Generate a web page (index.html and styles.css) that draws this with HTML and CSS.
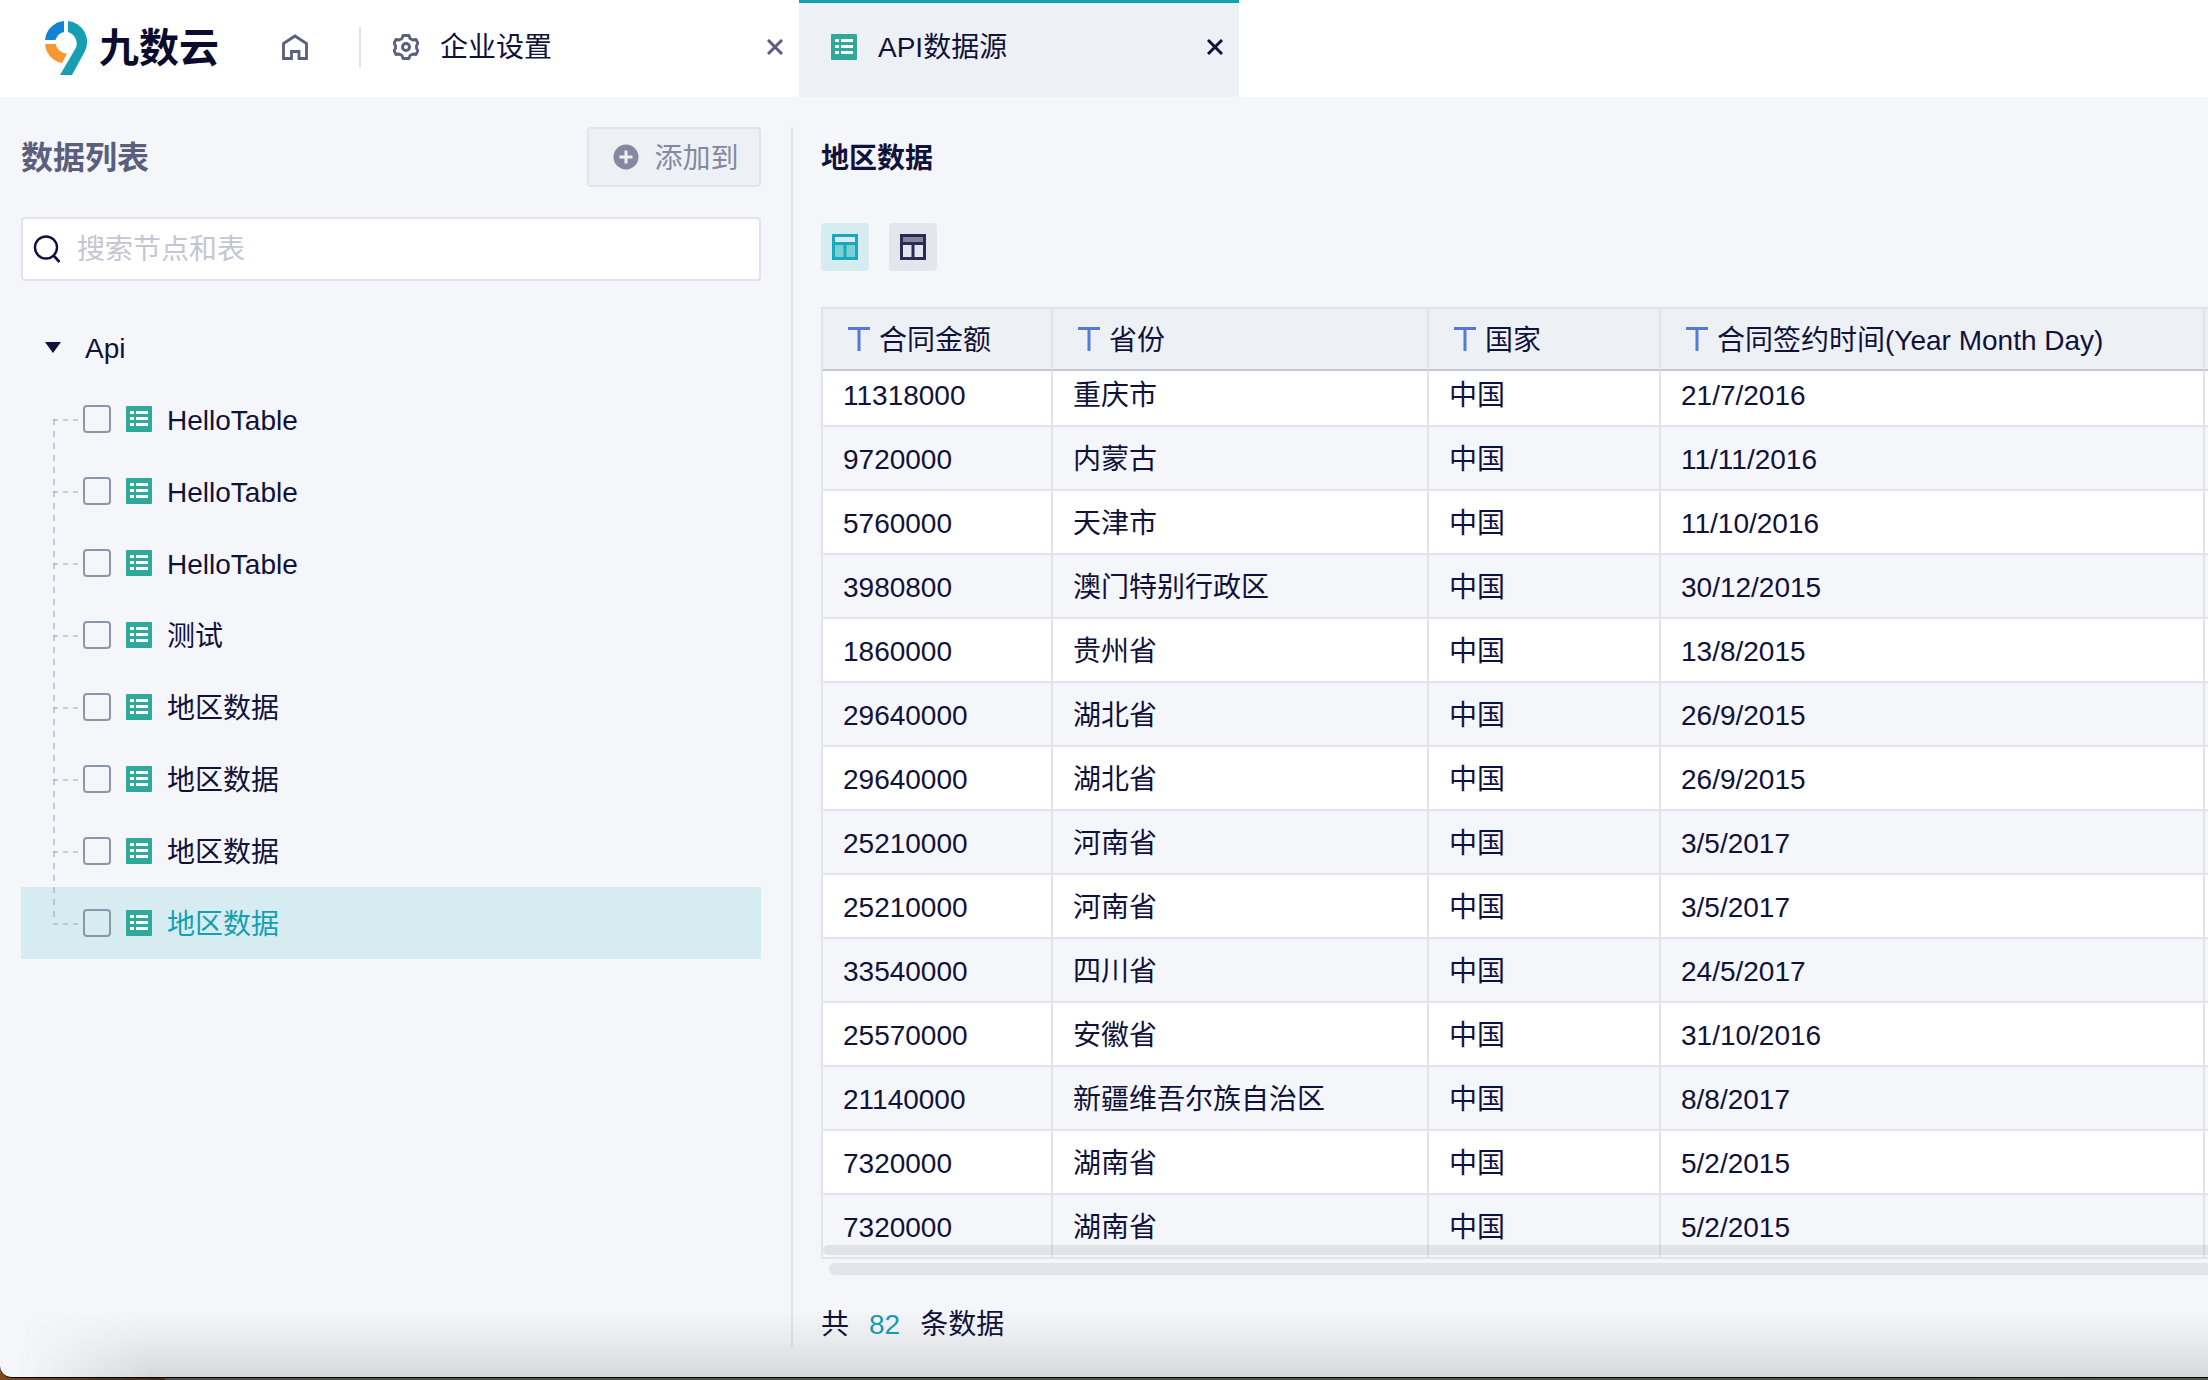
FILE: index.html
```html
<!DOCTYPE html>
<html lang="zh-CN">
<head>
<meta charset="utf-8">
<title>九数云 - API数据源</title>
<link rel="stylesheet" href="styles.css">
</head>
<body>
<svg class="sprite" aria-hidden="true">
  <symbol id="i-table" viewBox="0 0 26 26">
    <rect width="26" height="26" rx="1" fill="#2fa99a"/>
    <path fill="#fff" d="M4 5h4v3H4zM10 5h12v3H10zM4 11h4v3H4zM10 11h12v3H10zM4 17h4v3H4zM10 17h12v3H10z"/>
  </symbol>
  <symbol id="i-close" viewBox="0 0 16 16">
    <path d="M1 1 15 15M15 1 1 15" fill="none" stroke="currentColor" stroke-width="3"/>
  </symbol>
  <symbol id="i-text" viewBox="0 0 22 24">
    <path d="M0 1.500h22M11 2v22" fill="none" stroke="#5579d6" stroke-width="3"/>
  </symbol>
</svg>
<div class="app">
  <header class="topbar">
    <a class="brand" href="#">
      <svg class="brand-mark" viewBox="0 0 42 54" aria-hidden="true">
        <path fill="#169fb3" d="M23 0A21 21 0 0 1 39.500 31L27 54H15L31 26.500A12 12 0 0 0 23 11Z"/>
        <path fill="#1482d6" d="M19 0V11A12 12 0 0 0 10.500 19H0A21 21 0 0 1 19 0Z"/>
        <path fill="#f69730" d="M0 23H10.500A12 12 0 0 0 22 32.500L17 42A21 21 0 0 1 0 23Z"/>
      </svg>
      <span>九数云</span>
    </a>
    <a class="home" href="#" aria-label="首页">
      <svg viewBox="0 0 26 26" width="26" height="26"><path d="M1.500 9.500 13 2l11.500 7.500v15H17v-7H9.500v7h-8Z" fill="none" stroke="currentColor" stroke-width="2.800"/></svg>
    </a>
    <nav class="tabs">
      <div class="tab">
        <svg viewBox="0 0 26 26" width="26" height="26" aria-hidden="true"><path d="M10 1.500h6l1 3 3 1.500 3-.5 2 4-1.500 2v3l1.500 2-2 4-3-.5-3 1.500-1 3h-6l-1-3L6 20l-3 .5-2-4 1.500-2v-3L1 9.500l2-4 3 .5 3-1.500Z" fill="none" stroke="currentColor" stroke-width="2.800" stroke-linejoin="round"/><circle cx="13" cy="13" r="3.500" fill="none" stroke="currentColor" stroke-width="3"/></svg>
        <a href="#">企业设置</a>
        <button class="close" aria-label="关闭企业设置"><svg width="16" height="16"><use href="#i-close"/></svg></button>
      </div>
      <div class="tab active">
        <svg width="26" height="26" aria-hidden="true"><use href="#i-table"/></svg>
        <a href="#">API数据源</a>
        <button class="close" aria-label="关闭API数据源"><svg width="16" height="16"><use href="#i-close"/></svg></button>
      </div>
    </nav>
  </header>

  <div class="body">
    <aside class="sidebar">
      <div class="side-head">
        <h2>数据列表</h2>
        <button class="add"><svg viewBox="0 0 26 26" width="26" height="26" aria-hidden="true"><circle cx="13" cy="13" r="12.500" fill="#8588a0"/><path d="M13 6.500v13M6.500 13h13" stroke="#edf0f5" stroke-width="3"/></svg><span>添加到</span></button>
      </div>
      <label class="search">
        <svg viewBox="0 0 28 28" width="28" height="28" aria-hidden="true"><circle cx="13" cy="12.500" r="11" fill="none" stroke="#11123a" stroke-width="2.400"/><path d="m20.500 20.500 6 6.500" stroke="#11123a" stroke-width="2.600"/></svg>
        <input type="text" placeholder="搜索节点和表" aria-label="搜索节点和表">
      </label>
      <div class="tree">
        <div class="node"><svg viewBox="0 0 16 11" width="16" height="11" aria-hidden="true"><path d="M0 0h16L8 11Z" fill="#11123a"/></svg><span>Api</span></div>
        <ul>
          <li><label><input type="checkbox"><svg width="26" height="26"><use href="#i-table"/></svg><span>HelloTable</span></label></li>
          <li><label><input type="checkbox"><svg width="26" height="26"><use href="#i-table"/></svg><span>HelloTable</span></label></li>
          <li><label><input type="checkbox"><svg width="26" height="26"><use href="#i-table"/></svg><span>HelloTable</span></label></li>
          <li><label><input type="checkbox"><svg width="26" height="26"><use href="#i-table"/></svg><span>测试</span></label></li>
          <li><label><input type="checkbox"><svg width="26" height="26"><use href="#i-table"/></svg><span>地区数据</span></label></li>
          <li><label><input type="checkbox"><svg width="26" height="26"><use href="#i-table"/></svg><span>地区数据</span></label></li>
          <li><label><input type="checkbox"><svg width="26" height="26"><use href="#i-table"/></svg><span>地区数据</span></label></li>
          <li class="selected"><label><input type="checkbox"><svg width="26" height="26"><use href="#i-table"/></svg><span>地区数据</span></label></li>
        </ul>
      </div>
    </aside>

    <main class="content">
      <h1>地区数据</h1>
      <div class="views">
        <button class="view on" aria-label="数据视图"><svg viewBox="0 0 26 26" width="26" height="26"><path fill="#7bced6" d="M2 10h22v14H2z"/><path d="M1.500 1.500h23v23h-23zM2 9.500h22M13 10v14" fill="none" stroke="currentColor" stroke-width="3"/></svg></button>
        <button class="view" aria-label="字段视图"><svg viewBox="0 0 26 26" width="26" height="26"><path fill="#85869f" d="M2 2h22v7H2z"/><path d="M1.500 1.500h23v23h-23zM2 9.500h22M13 10v14" fill="none" stroke="currentColor" stroke-width="3"/></svg></button>
      </div>
      <div class="grid">
        <table>
          <colgroup><col class="c-amount"><col class="c-prov"><col class="c-country"><col class="c-date"><col></colgroup>
          <thead><tr>
            <th><svg width="22" height="24"><use href="#i-text"/></svg>合同金额</th>
            <th><svg width="22" height="24"><use href="#i-text"/></svg>省份</th>
            <th><svg width="22" height="24"><use href="#i-text"/></svg>国家</th>
            <th><svg width="22" height="24"><use href="#i-text"/></svg>合同签约时间(Year Month Day)</th>
            <th class="rest"></th>
          </tr></thead>
          <tbody>
            <tr><td>11318000</td><td>重庆市</td><td>中国</td><td>21/7/2016</td><td class="rest"></td></tr>
            <tr><td>9720000</td><td>内蒙古</td><td>中国</td><td>11/11/2016</td><td class="rest"></td></tr>
            <tr><td>5760000</td><td>天津市</td><td>中国</td><td>11/10/2016</td><td class="rest"></td></tr>
            <tr><td>3980800</td><td>澳门特别行政区</td><td>中国</td><td>30/12/2015</td><td class="rest"></td></tr>
            <tr><td>1860000</td><td>贵州省</td><td>中国</td><td>13/8/2015</td><td class="rest"></td></tr>
            <tr><td>29640000</td><td>湖北省</td><td>中国</td><td>26/9/2015</td><td class="rest"></td></tr>
            <tr><td>29640000</td><td>湖北省</td><td>中国</td><td>26/9/2015</td><td class="rest"></td></tr>
            <tr><td>25210000</td><td>河南省</td><td>中国</td><td>3/5/2017</td><td class="rest"></td></tr>
            <tr><td>25210000</td><td>河南省</td><td>中国</td><td>3/5/2017</td><td class="rest"></td></tr>
            <tr><td>33540000</td><td>四川省</td><td>中国</td><td>24/5/2017</td><td class="rest"></td></tr>
            <tr><td>25570000</td><td>安徽省</td><td>中国</td><td>31/10/2016</td><td class="rest"></td></tr>
            <tr><td>21140000</td><td>新疆维吾尔族自治区</td><td>中国</td><td>8/8/2017</td><td class="rest"></td></tr>
            <tr><td>7320000</td><td>湖南省</td><td>中国</td><td>5/2/2015</td><td class="rest"></td></tr>
            <tr><td>7320000</td><td>湖南省</td><td>中国</td><td>5/2/2015</td><td class="rest"></td></tr>
          </tbody>
        </table>
        <div class="inner-scroll"></div>
      </div>
      <div class="outer-scroll"></div>
      <p class="total"><span>共</span><b>82</b><span>条数据</span></p>
    </main>
  </div>
</div>
</body>
</html>
```
FILE: styles.css
```css
:root {
  --ink: #11123a;
  --muted: #5b5e7d;
  --line: #e1e4e9;
  --teal: #169fb3;
  --page: #f4f6fa;
  --panel: #edf0f5;
}

* { box-sizing: border-box; }

body {
  margin: 0;
  min-height: 100vh;
  display: flex;
  overflow: hidden;
  background: linear-gradient(to right, #7e4a20 0, #3f2818 165px, #50514e 165px, #50554e 100%);
  color: var(--ink);
  font: 28px/40px "Liberation Sans", "Noto Sans CJK SC", sans-serif;
}

.sprite { display: none; }

svg { display: block; flex: none; }

a { color: inherit; text-decoration: none; }

button {
  border: 0;
  padding: 0;
  background: none;
  color: inherit;
  font: inherit;
  display: flex;
  align-items: center;
  justify-content: center;
}

h1, h2, p, ul { margin: 0; padding: 0; }

/* Window frame */
.app {
  flex: 1;
  min-width: 0;
  display: flex;
  flex-direction: column;
  margin-bottom: 2px;
  border-bottom: 1px solid #000;
  border-bottom-left-radius: 12px;
  background: var(--page);
  position: relative;
  overflow: hidden;
}

.app::after {
  content: "";
  position: absolute;
  inset: auto 0 0 0;
  height: 68px;
  pointer-events: none;
  background: linear-gradient(to bottom, rgba(60, 60, 50, 0), rgba(60, 60, 50, .06) 45%, rgba(60, 60, 50, .16));
  -webkit-mask-image: linear-gradient(to right, transparent 20px, #000 150px);
  mask-image: linear-gradient(to right, transparent 20px, #000 150px);
}

/* Top bar */
.topbar {
  display: flex;
  align-items: center;
  height: 97px;
  padding-left: 45px;
  background: #fff;
}

.brand {
  display: flex;
  align-items: center;
  gap: 12px;
  padding-bottom: 1px;
  font-size: 40px;
  font-weight: 700;
  color: #0b0b2e;
}

.brand-mark { width: 42px; height: 54px; }

.home { margin-left: 63px; padding-bottom: 3px; color: var(--muted); }

.tabs {
  display: flex;
  align-items: center;
  align-self: stretch;
  margin-left: 51px;
}

.tabs::before {
  content: "";
  width: 2px;
  height: 40px;
  margin-bottom: 3px;
  background: #dfe4ea;
}

.tab {
  display: flex;
  align-items: center;
  gap: 21px;
  width: 438px;
  height: 100%;
  padding: 0 16px 3px 32px;
  color: var(--muted);
}

.tab a { flex: 1; padding-top: 2px; color: var(--ink); }

.tab.active {
  width: 440px;
  border-top: 3px solid var(--teal);
  padding-bottom: 6px;
  background: var(--panel);
  color: var(--ink);
}

/* Columns */
.body {
  flex: 1;
  display: flex;
  padding: 30px 0 30px 21px;
}

.sidebar {
  flex: none;
  width: 772px;
  padding-right: 30px;
  border-right: 2px solid var(--line);
}

.side-head {
  display: flex;
  align-items: center;
  justify-content: space-between;
}

.side-head h2 { padding-top: 2px; font-size: 32px; color: var(--muted); }

.add {
  width: 174px;
  height: 60px;
  gap: 15px;
  padding-left: 4px;
  border: 2px solid var(--line);
  border-radius: 4px;
  background: var(--panel);
  color: #8588a0;
}

/* Labels beside icons sit slightly low, on the icons' optical centre */
.add span,
.node span,
.tree label span { padding-top: 3px; }

.search {
  display: flex;
  align-items: center;
  gap: 16px;
  height: 64px;
  margin-top: 30px;
  padding: 0 12px 0 10px;
  border: 2px solid var(--line);
  border-radius: 4px;
  background: #fff;
}

.search input {
  flex: 1;
  min-width: 0;
  height: 42px;
  border: 0;
  padding: 2px 0 0;
  outline: 0;
  background: none;
  color: inherit;
  font: inherit;
}

.search input::placeholder { color: #c5c6d3; }

/* Tree */
.tree { margin-top: 30px; }

.node {
  display: flex;
  align-items: center;
  gap: 24px;
  height: 72px;
  padding-left: 24px;
}

.tree ul { list-style: none; }

.tree li { position: relative; padding-left: 62px; }

.tree li::before,
.tree li::after {
  content: "";
  position: absolute;
  left: 32px;
}

.tree li::before {
  top: 0;
  bottom: 0;
  width: 2px;
  background: repeating-linear-gradient(to bottom, rgba(140, 140, 170, .4) 0 6px, transparent 6px 12px);
}

.tree li::after {
  top: 36px;
  width: 30px;
  height: 2px;
  background: repeating-linear-gradient(to right, rgba(140, 140, 170, .4) 0 5px, transparent 5px 10px);
}

.tree li:first-child::before { top: 36px; }
.tree li:last-child::before { bottom: 36px; }

.tree label { display: flex; align-items: center; height: 72px; }

.tree input {
  appearance: none;
  width: 28px;
  height: 28px;
  margin: 0 15px 0 0;
  border: 2px solid #8d96a8;
  border-radius: 4px;
}

.tree label svg { margin-right: 15px; }

.tree .selected { background: #d7ecf1; color: var(--teal); }

/* Data panel */
.content {
  flex: 1;
  min-width: 0;
  padding-left: 28px;
}

.content h1 { padding-top: 2px; font-size: 28px; line-height: 60px; }

.views { display: flex; gap: 20px; margin-top: 34px; }

.view {
  width: 48px;
  height: 48px;
  border-radius: 4px;
  background: #e5e5ee;
  color: #2b2c54;
}

.view.on { background: #d7ecf0; color: #17aabb; }

.grid {
  position: relative;
  margin-top: 36px;
  border: solid var(--line);
  border-width: 2px 0 0 2px;
}

table {
  width: 100%;
  table-layout: fixed;
  border-spacing: 0;
}

.c-amount { width: 230px; }
.c-prov { width: 376px; }
.c-country { width: 232px; }
.c-date { width: 544px; }

th, td {
  padding: 3px 0 0 20px;
  border: solid var(--line);
  border-width: 0 2px 2px 0;
  text-align: left;
  white-space: nowrap;
}

th {
  height: 62px;
  padding-left: 25px;
  border-bottom-color: #c3c7cf;
  background: var(--panel);
  font-weight: 400;
}

th svg { display: inline-block; margin-right: 9px; vertical-align: -1px; }

td { height: 64px; background: #fff; }

tr:nth-child(even) td { background: var(--page); }

/* The body is scrolled a little, so its first row sits under the header */
tbody tr:first-child td { height: 56px; padding-bottom: 8px; }

.rest { padding: 0; border-right: 0; }

.inner-scroll {
  position: absolute;
  left: 0;
  right: 0;
  bottom: 4px;
  height: 10px;
  border-radius: 5px 0 0 5px;
  background: rgba(60, 80, 70, .11);
}

.outer-scroll {
  height: 12px;
  margin: 4px 0 0 8px;
  border-radius: 6px 0 0 6px;
  background: var(--line);
}

.total { display: flex; gap: 20px; margin-top: 30px; }

.total b { font-weight: 400; color: var(--teal); }
```
